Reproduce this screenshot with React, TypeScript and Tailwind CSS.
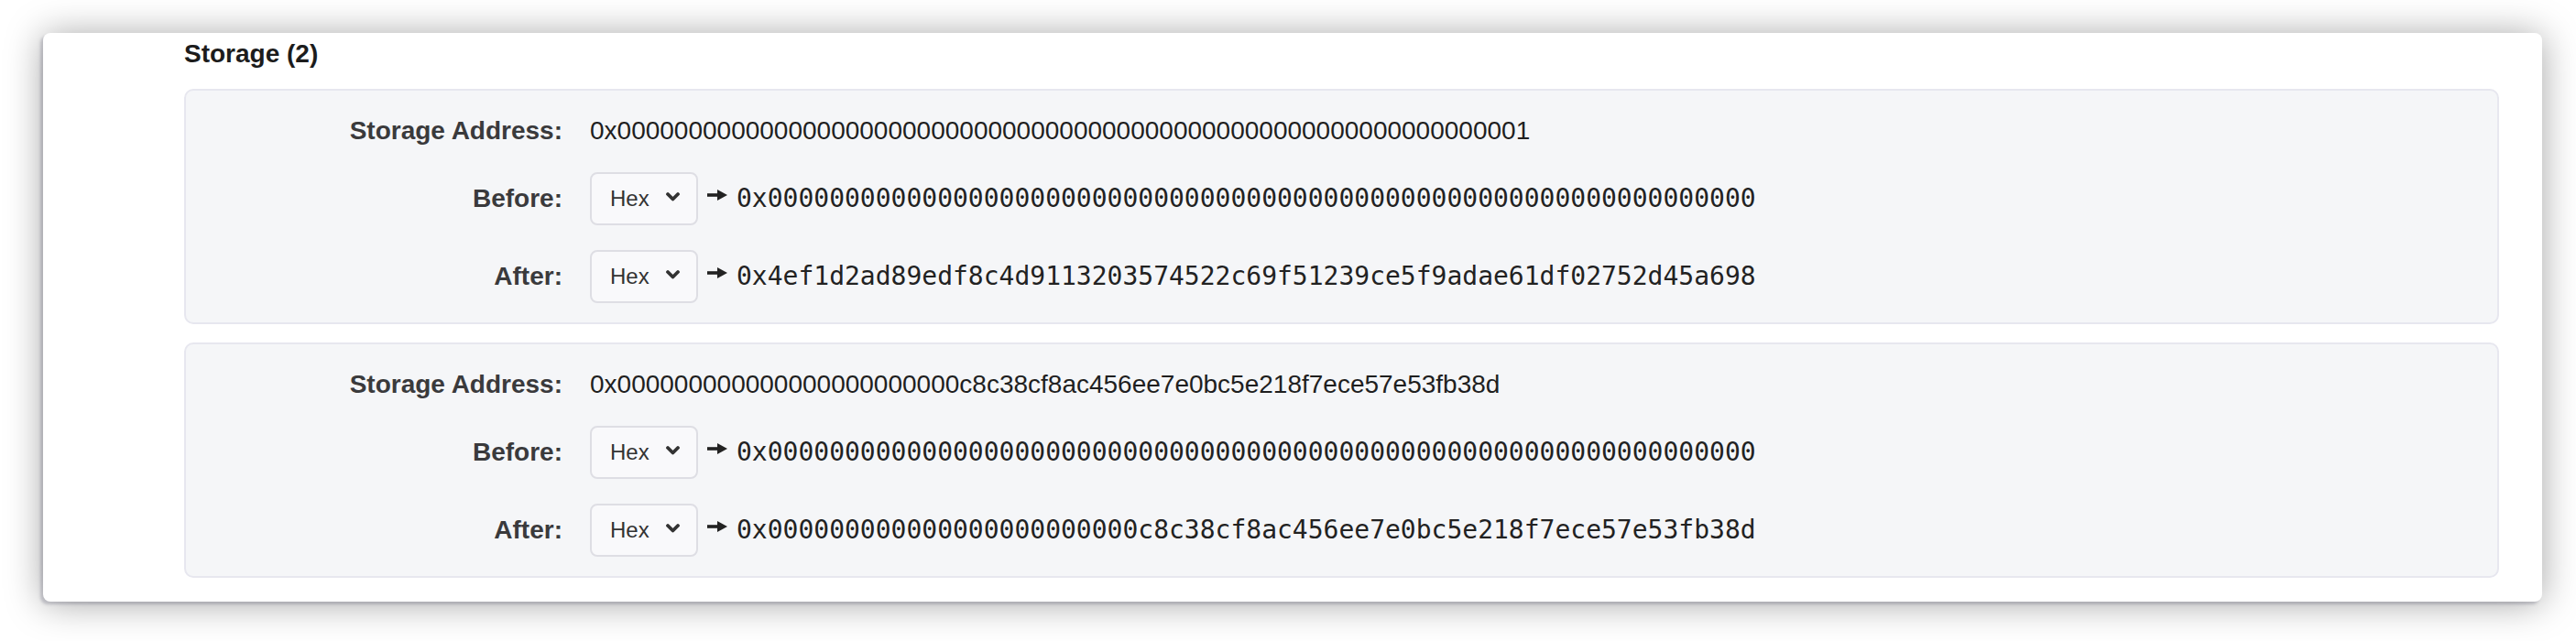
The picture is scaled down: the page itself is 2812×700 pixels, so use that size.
import React from "react";

type Slot = {
  address: string;
  before: string;
  after: string;
};

const slots: Slot[] = [
  {
    address: "0x0000000000000000000000000000000000000000000000000000000000000001",
    before: "0x0000000000000000000000000000000000000000000000000000000000000000",
    after: "0x4ef1d2ad89edf8c4d9113203574522c69f51239ce5f9adae61df02752d45a698",
  },
  {
    address: "0x000000000000000000000000c8c38cf8ac456ee7e0bc5e218f7ece57e53fb38d",
    before: "0x0000000000000000000000000000000000000000000000000000000000000000",
    after: "0x000000000000000000000000c8c38cf8ac456ee7e0bc5e218f7ece57e53fb38d",
  },
];

function Label({ children }: { children: React.ReactNode }) {
  return (
    <div className="w-[411px] shrink-0 text-right text-[28px] font-bold leading-none text-[#3a3a3c]">
      {children}
    </div>
  );
}

function HexSelect() {
  return (
    <div className="flex h-[58px] w-[118px] shrink-0 items-center rounded-[8px] border-2 border-[#dedee4] bg-[#f9f9fb] pl-[20px]">
      <span className="text-[24px] leading-none text-[#333]">Hex</span>
      <svg className="ml-[17px] mb-[6px]" width="17" height="11" viewBox="0 0 17 11">
        <path d="M3 3 L8.5 8.5 L14 3" fill="none" stroke="#333" strokeWidth="3.8" strokeLinecap="round" strokeLinejoin="round" />
      </svg>
    </div>
  );
}

function Arrow() {
  return (
    <svg className="mx-[10px] mb-[8px] shrink-0" width="22" height="14" viewBox="0 0 22 14">
      <rect x="0" y="5.2" width="13" height="3.6" fill="#222" />
      <path d="M11 1 L22 7 L11 13 Z" fill="#222" />
    </svg>
  );
}

function ValueRow({ label, value }: { label: string; value: string }) {
  return (
    <div className="flex h-[58px] items-center">
      <Label>{label}</Label>
      <div className="ml-[30px] flex items-center">
        <HexSelect />
        <Arrow />
        <span className="text-[28px] leading-none text-[#222] [font-family:'DejaVu_Sans_Mono',monospace]">
          {value}
        </span>
      </div>
    </div>
  );
}

function SlotCard({ slot }: { slot: Slot }) {
  return (
    <div className="flex flex-col gap-[27px] rounded-[10px] border-2 border-[#e7e7ef] bg-[#f5f6f8] pt-[26px] pb-[21px]">
      <div className="flex h-[36px] items-center">
        <Label>Storage Address:</Label>
        <span className="ml-[30px] text-[28px] leading-none text-[#1f1f1f]">{slot.address}</span>
      </div>
      <ValueRow label="Before:" value={slot.before} />
      <ValueRow label="After:" value={slot.after} />
    </div>
  );
}

export default function App() {
  return (
    <div className="h-[700px] w-[2812px] bg-white pt-[36px] pl-[47px] [font-family:'Liberation_Sans',Arial,sans-serif]">
      <div className="w-[2728px] rounded-[8px] bg-white pt-[6px] pr-[47px] pb-[26px] pl-[154px] shadow-[-3px_3px_3px_rgba(90,90,110,0.28),0_2px_40px_rgba(0,0,0,0.36)]">
        <h2 className="h-[34px] text-[28px] font-bold leading-[34px] text-[#1c1c1c]">Storage (2)</h2>
        <div className="mt-[21px] flex flex-col gap-[20px]">
          {slots.map((slot) => (
            <SlotCard key={slot.address} slot={slot} />
          ))}
        </div>
      </div>
    </div>
  );
}
